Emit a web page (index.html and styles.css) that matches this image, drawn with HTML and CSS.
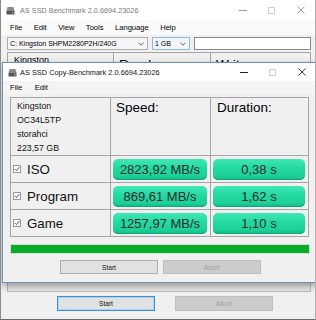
FILE: index.html
```html
<!DOCTYPE html>
<html>
<head>
<meta charset="utf-8">
<link rel="stylesheet" href="styles.css">
</head>
<body>
<div class="win">
  <div class="titlebar">
    <svg class="appicon" width="9" height="9" viewBox="0 0 9 9"><path d="M1.5 1 H7.5 L8.5 5 H0.5 Z" fill="#8a8a8a"/><rect x="0.5" y="5" width="8" height="3.5" rx="0.5" fill="#555"/><rect x="6" y="6.3" width="1.5" height="1" fill="#ccc"/></svg>
    <span class="title inactive">AS SSD Benchmark 2.0.6694.23026</span>
    <div class="ctrls">
      <div class="cb"><svg width="8" height="8" viewBox="0 0 8 8"><path d="M0 4.5 H8" stroke="#9a9a9a" stroke-width="1"/></svg></div>
      <div class="cb"><svg width="7" height="7" viewBox="0 0 7 7"><rect x="0.5" y="0.5" width="6" height="6" fill="none" stroke="#d0d0d0" stroke-width="1"/></svg></div>
      <div class="cb"><svg width="8" height="8" viewBox="0 0 8 8"><path d="M0.5 0.5 L7.5 7.5 M7.5 0.5 L0.5 7.5" stroke="#9a9a9a" stroke-width="0.9"/></svg></div>
    </div>
  </div>
  <div class="menubar">
    <span>File</span><span>Edit</span><span>View</span><span>Tools</span><span>Language</span><span>Help</span>
  </div>
  <div class="toolbar">
    <div class="combo c1"><span>C: Kingston SHPM2280P2H/240G</span><svg class="chev" width="6" height="4" viewBox="0 0 6 4"><path d="M0.5 0.8 L3 3.2 L5.5 0.8" fill="none" stroke="#555" stroke-width="0.9"/></svg></div>
    <div class="combo c2"><span>1 GB</span><svg class="chev" width="6" height="4" viewBox="0 0 6 4"><path d="M0.5 0.8 L3 3.2 L5.5 0.8" fill="none" stroke="#555" stroke-width="0.9"/></svg></div>
    <div class="textbox"></div>
  </div>
  <div class="content">
    <div class="bgtable">
      <div class="bghead">
        <div class="bgcell small">Kingston</div>
        <div class="bgcell big">Read:</div>
        <div class="bgcell big last">Write:</div>
      </div>
    </div>
    <div class="bgprogress"></div>
    <div class="buttons bgbuttons">
      <div class="btn focus">Start</div>
      <div class="btn disabled">Abort</div>
    </div>
  </div>

  <div class="dialog">
    <div class="titlebar dtitle">
      <svg class="appicon" width="9" height="9" viewBox="0 0 9 9"><path d="M1.5 1 H7.5 L8.5 5 H0.5 Z" fill="#8a8a8a"/><rect x="0.5" y="5" width="8" height="3.5" rx="0.5" fill="#555"/><rect x="6" y="6.3" width="1.5" height="1" fill="#ccc"/></svg>
      <span class="title">AS SSD Copy-Benchmark 2.0.6694.23026</span>
      <div class="ctrls">
        <div class="cb"><svg width="8" height="8" viewBox="0 0 8 8"><path d="M0 4.5 H8" stroke="#222" stroke-width="1"/></svg></div>
        <div class="cb"><svg width="7" height="7" viewBox="0 0 7 7"><rect x="0.5" y="0.5" width="6" height="6" fill="none" stroke="#cfcfcf" stroke-width="1"/></svg></div>
        <div class="cb"><svg width="8" height="8" viewBox="0 0 8 8"><path d="M0.5 0.5 L7.5 7.5 M7.5 0.5 L0.5 7.5" stroke="#222" stroke-width="0.9"/></svg></div>
      </div>
    </div>
    <div class="menubar dmenu"><span>File</span><span>Edit</span></div>
    <div class="table">
      <div class="cell info">
        <div>Kingston</div><div>OC34L5TP</div><div>storahci</div><div>223,57 GB</div>
      </div>
      <div class="cell head">Speed:</div>
      <div class="cell head h3">Duration:</div>

      <div class="cell label"><svg class="chk" width="8" height="8" viewBox="0 0 8 8"><rect x="0.5" y="0.5" width="7" height="7" fill="#fff" stroke="#999"/><path d="M1.8 4 L3.4 5.6 L6.3 2.2" fill="none" stroke="#444" stroke-width="0.9"/></svg>ISO</div>
      <div class="cell val"><div class="green">2823,92 MB/s</div></div>
      <div class="cell val v3"><div class="green">0,38 s</div></div>

      <div class="cell label"><svg class="chk" width="8" height="8" viewBox="0 0 8 8"><rect x="0.5" y="0.5" width="7" height="7" fill="#fff" stroke="#999"/><path d="M1.8 4 L3.4 5.6 L6.3 2.2" fill="none" stroke="#444" stroke-width="0.9"/></svg>Program</div>
      <div class="cell val"><div class="green">869,61 MB/s</div></div>
      <div class="cell val v3"><div class="green">1,62 s</div></div>

      <div class="cell label"><svg class="chk" width="8" height="8" viewBox="0 0 8 8"><rect x="0.5" y="0.5" width="7" height="7" fill="#fff" stroke="#999"/><path d="M1.8 4 L3.4 5.6 L6.3 2.2" fill="none" stroke="#444" stroke-width="0.9"/></svg>Game</div>
      <div class="cell val"><div class="green">1257,97 MB/s</div></div>
      <div class="cell val v3"><div class="green">1,10 s</div></div>
    </div>
    <div class="progress"></div>
    <div class="buttons dbuttons">
      <div class="btn">Start</div>
      <div class="btn disabled">Abort</div>
    </div>
  </div>
</div>
</body>
</html>
```

FILE: styles.css
```css
html, body {
  margin: 0;
  padding: 0;
  background: #f0f0f0;
}
body {
  font-family: "Liberation Sans", Arial, sans-serif;
  color: #000;
}
.win {
  position: relative;
  width: 316px;
  height: 320px;
  box-sizing: border-box;
  border-left: 1px solid #8c8c8c;
  border-right: 1px solid #b0b0b0;
  border-bottom: 1px solid #6c6c6c;
  background: #f0f0f0;
  overflow: hidden;
  display: flex;
  flex-direction: column;
}
.titlebar {
  height: 20px;
  flex: none;
  background: #fff;
  display: flex;
  align-items: center;
}
.appicon {
  margin-left: 5px;
  flex: none;
}
.title {
  margin-left: 5px;
  font-size: 7.3px;
  white-space: nowrap;
  color: #111;
}
.title.inactive {
  color: #7a7a7a;
}
.ctrls {
  margin-left: auto;
  display: flex;
  height: 100%;
}
.cb {
  width: 29px;
  height: 100%;
  display: flex;
  align-items: center;
  justify-content: center;
}
.menubar {
  height: 15px;
  flex: none;
  background: #fafafa;
  display: flex;
  align-items: center;
  gap: 11.4px;
  padding-left: 9px;
  font-size: 7.6px;
}
.toolbar {
  height: 16px;
  flex: none;
  box-sizing: border-box;
  padding: 2px 0 0 6px;
  display: flex;
  align-items: flex-start;
}
.combo {
  height: 13px;
  box-sizing: border-box;
  border: 1px solid #adadad;
  background: #f6f6f6;
  display: flex;
  align-items: center;
  font-size: 7px;
  padding-left: 2px;
  white-space: nowrap;
}
.combo .chev {
  margin-left: auto;
  margin-right: 3px;
}
.c1 {
  width: 141px;
}
.c2 {
  width: 38px;
  margin-left: 4px;
  border-color: #8fb8e0;
  background: #f2f6fa;
}
.textbox {
  width: 117px;
  height: 13px;
  margin-left: 4px;
  box-sizing: border-box;
  border: 1px solid #8a8a8a;
  background: #fff;
}
.content {
  flex: 1;
  display: flex;
  flex-direction: column;
  padding: 1px 4px 8px 6px;
  min-height: 0;
}
.bgtable {
  flex: 1;
  border: 1px solid #a5a5a5;
  display: flex;
  flex-direction: column;
}
.bghead {
  height: 9px;
  overflow: hidden;
  display: grid;
  grid-template-columns: 106px 97px 1fr;
}
.bgcell {
  border-right: 1px solid #a5a5a5;
  box-sizing: border-box;
  line-height: 1;
  white-space: nowrap;
}
.bgcell.last {
  border-right: none;
}
.bgcell.small {
  font-size: 9px;
  padding: 3px 0 0 6px;
}
.bgcell.big {
  font-size: 13.5px;
  padding: 5px 0 0 5px;
}
.bgprogress {
  height: 12px;
  margin-top: 4px;
  box-sizing: border-box;
  border: 1px solid #bcbcbc;
  background: #e6e6e6;
  flex: none;
}
.buttons {
  display: flex;
  flex: none;
}
.bgbuttons {
  margin-top: 4px;
  padding-left: 50px;
  gap: 20px;
}
.btn {
  width: 98px;
  height: 15px;
  box-sizing: border-box;
  border: 1px solid #adadad;
  background: #e1e1e1;
  font-size: 6.6px;
  display: flex;
  align-items: center;
  justify-content: center;
  color: #111;
}
.btn.focus {
  border: 1px solid #3b8fd2;
  box-shadow: inset 0 0 0 1px #a9d4f2;
}
.btn.disabled {
  background: #cccccc;
  border-color: #bfbfbf;
  color: #a0a0a0;
}
.dialog {
  position: absolute;
  left: 1px;
  top: 62px;
  width: 316px;
  box-sizing: border-box;
  border: 1px solid #6f90b0;
  background: #f0f0f0;
  box-shadow: 0 3px 7px rgba(0, 0, 0, 0.35);
  padding-bottom: 8px;
}
.dtitle {
  height: 18px;
}
.dtitle .title {
  margin-left: 3px;
  font-size: 7.4px;
}
.dtitle .ctrls {
  margin-right: 1px;
}
.dmenu {
  height: 13px;
  background: #f4f4f4;
  padding-left: 7px;
  gap: 12.5px;
}
.table {
  margin: 3px 0 0 7px;
  width: 299px;
  box-sizing: border-box;
  border-top: 1px solid #a5a5a5;
  border-left: 1px solid #a5a5a5;
  display: grid;
  grid-template-columns: 100px 100px 98px;
  grid-template-rows: 58px 27px 27px 27px;
}
.cell {
  box-sizing: border-box;
  border-right: 1px solid #a5a5a5;
  border-bottom: 1px solid #a5a5a5;
}
.info {
  font-size: 8.8px;
  line-height: 14px;
  padding: 1px 0 0 6px;
  color: #111;
}
.head {
  font-size: 13.5px;
  line-height: 16px;
  padding: 2px 0 0 5px;
}
.head.h3 {
  padding-left: 6px;
}
.label {
  display: flex;
  align-items: center;
  font-size: 13.3px;
  padding-left: 2px;
  color: #111;
}
.chk {
  margin-right: 6px;
  flex: none;
}
.val {
  padding: 3px 3px 2px 2px;
}
.green {
  height: 100%;
  border-radius: 5px;
  background: linear-gradient(#3ee8b4 0%, #22d9a0 45%, #1dd199 80%, #12b784 100%);
  box-shadow: inset 0 -1px 0 #10a877;
  display: flex;
  align-items: center;
  justify-content: center;
  font-size: 13px;
  color: #2a2a2a;
}
.progress {
  margin: 7px 0 0 7px;
  width: 300px;
  height: 10px;
  box-sizing: border-box;
  border: 1px solid #dcdcdc;
  background: #07ad27;
}
.dbuttons {
  margin-top: 6px;
  padding-left: 57px;
  gap: 5px;
}
.dbuttons .btn {
  height: 14px;
}
```
